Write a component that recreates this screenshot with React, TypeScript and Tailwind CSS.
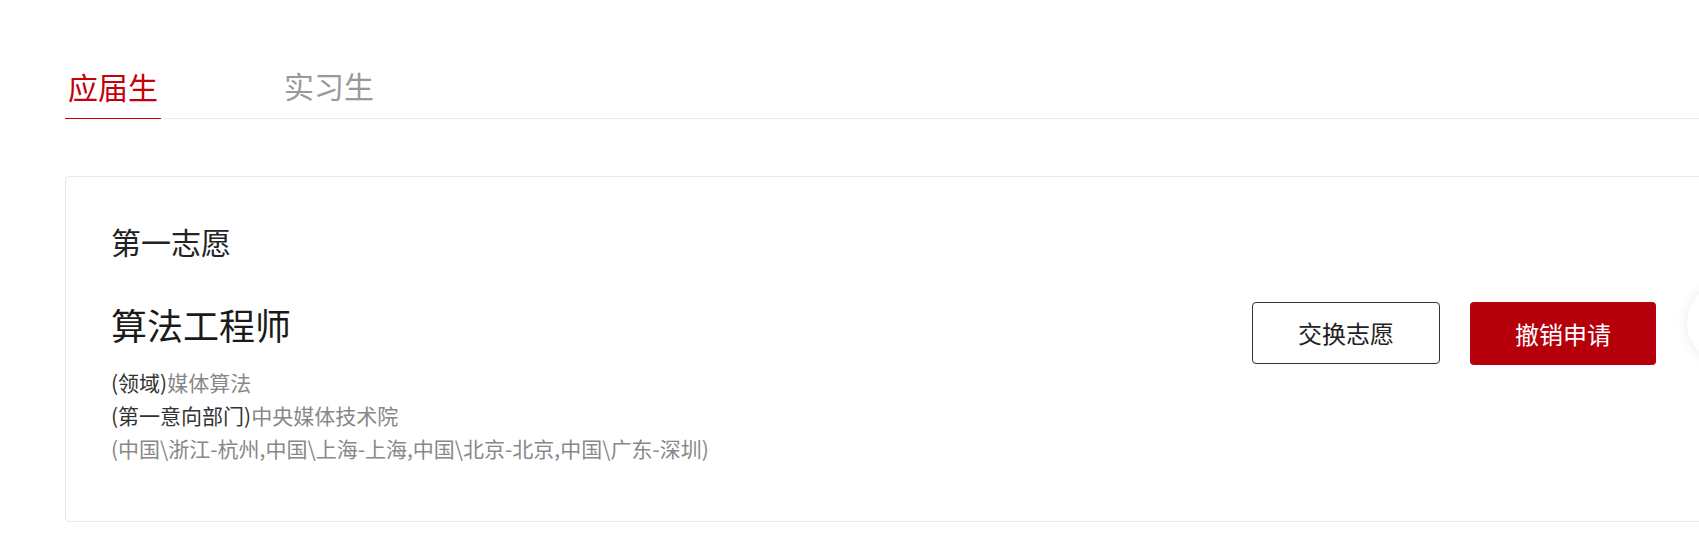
export default function App() {
  const font = { fontFamily: '"Noto Sans CJK SC", "Noto Sans", sans-serif' };
  return (
    <div className="relative w-full h-[539px] overflow-hidden bg-white" style={font}>
      <div className="pl-[65px] pt-[64px]">
        {/* tabs */}
        <div className="w-[1700px] flex items-end border-b border-[#ececec]">
          <div className="w-[96px] h-[54px] flex justify-center text-[30px] leading-[42px] text-[#c4000b] border-b border-[#c4000b] -mb-px">
            应届生
          </div>
          <div className="ml-[123px] h-[54px] text-[30px] leading-[42px] text-[#999999]">实习生</div>
        </div>

        {/* application card */}
        <div className="mt-[57px] w-[1674px] border border-[#e8e8e8] rounded-[4px] pl-[45px] pr-[82px] pt-[43px] pb-[56px]">
          <div className="text-[30px] leading-[42px] text-[#222222]">第一志愿</div>
          <div className="mt-[38px] flex justify-between items-start">
            <div>
              <div className="text-[36px] leading-[48px] text-[#1a1a1a]">算法工程师</div>
              <div className="mt-[18px] text-[21px] leading-[33px]">
                <div>
                  <span className="text-[#333333]">(领域)</span>
                  <span className="text-[#888888]">媒体算法</span>
                </div>
                <div>
                  <span className="text-[#333333]">(第一意向部门)</span>
                  <span className="text-[#888888]">中央媒体技术院</span>
                </div>
                <div className="text-[#888888]">(中国\浙江-杭州,中国\上海-上海,中国\北京-北京,中国\广东-深圳)</div>
              </div>
            </div>
            <div className="mt-[2px] flex gap-[30px]">
              <button className="w-[188px] h-[62px] border border-[#333333] rounded-[4px] text-[24px] text-[#222222] bg-white">
                交换志愿
              </button>
              <button className="w-[186px] h-[63px] rounded-[4px] text-[24px] text-white bg-[#b5000b]">
                撤销申请
              </button>
            </div>
          </div>
        </div>
      </div>

      {/* floating round button, cut off at right edge */}
      <div className="absolute left-[1687px] top-[283px] w-[80px] h-[80px] rounded-full bg-white shadow-[0_0_12px_rgba(120,140,180,0.18)]" />
    </div>
  );
}
